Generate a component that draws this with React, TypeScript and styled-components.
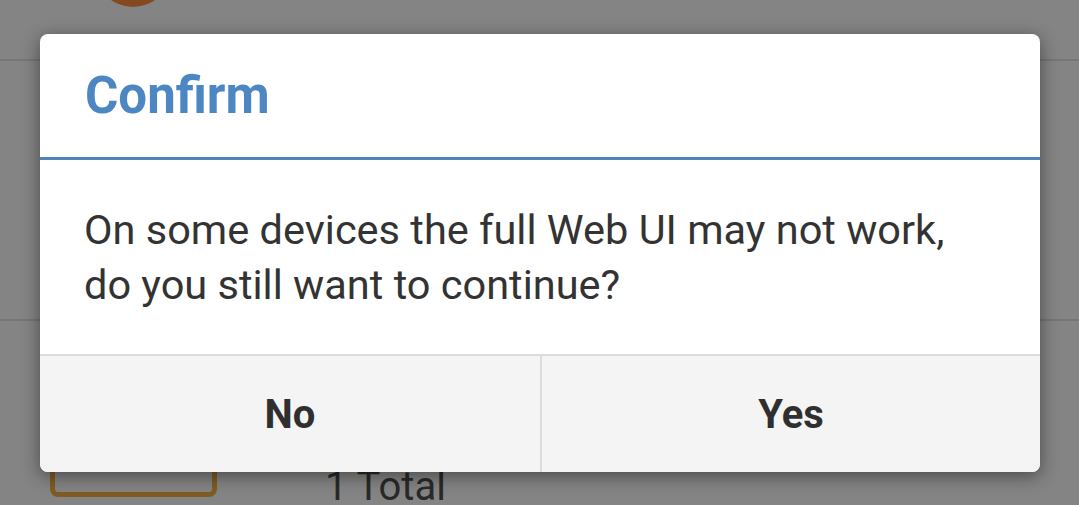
import React from 'react';
import styled, { createGlobalStyle } from 'styled-components';

const GlobalStyle = createGlobalStyle`
  html, body {
    margin: 0;
    padding: 0;
    width: 1079px;
    height: 505px;
    overflow: hidden;
    background: #ffffff;
    font-family: Roboto, "Noto Sans", sans-serif;
  }
`;

// page behind the dialog
const Page = styled.div`
  position: relative;
  width: 1079px;
  height: 505px;
  overflow: hidden;
  background: #fdfdfd;
`;

const TopBar = styled.div`
  height: 59px;
  border-bottom: 2px solid #e2e2e2;
  display: flex;
  align-items: flex-end;
  padding-left: 95px;
`;

const Avatar = styled.div`
  width: 76px;
  height: 76px;
  margin-bottom: 52px;
  border-radius: 50%;
  background: #ff8c3c;
`;

const ListRow = styled.div<{ $height: number; $last?: boolean }>`
  height: ${(p) => p.$height}px;
  border-bottom: ${(p) => (p.$last ? '0' : '2px solid #e2e2e2')};
  display: flex;
  align-items: flex-end;
`;

const BoxIcon = styled.div`
  width: 157px;
  height: 120px;
  margin: 0 0 4px 50px;
  border: 5px solid #f3b040;
  border-radius: 8px;
`;

const TotalText = styled.div`
  margin: 0 0 -6px 108px;
  font-size: 40px;
  line-height: 40px;
  color: #505050;
`;

const Overlay = styled.div`
  position: absolute;
  inset: 0;
  background: rgba(0, 0, 0, 0.48);
`;

const Dialog = styled.div`
  position: absolute;
  left: 40px;
  top: 34px;
  width: 1000px;
  background: #ffffff;
  border-radius: 8px;
  overflow: hidden;
  box-shadow: 0 4px 18px rgba(0, 0, 0, 0.45);
  display: flex;
  flex-direction: column;
`;

const Header = styled.div`
  height: 123px;
  display: flex;
  align-items: center;
  padding: 0 45px;
  border-bottom: 3px solid #4f84b8;
`;

const Title = styled.h1`
  margin: 0;
  font-size: 51px;
  font-weight: 700;
  color: #4d87c3;
`;

const Body = styled.div`
  height: 194px;
  display: flex;
  align-items: center;
  padding: 0 44px;
`;

const Message = styled.p`
  margin: 0;
  font-size: 41.5px;
  line-height: 55px;
  color: #333333;
`;

const Buttons = styled.div`
  display: grid;
  grid-template-columns: 1fr 1fr;
  border-top: 2px solid #dcdcdc;
  background: #f4f4f4;
`;

const Button = styled.button<{ $divider?: boolean }>`
  height: 116px;
  border: 0;
  border-left: ${(p) => (p.$divider ? '2px solid #dcdcdc' : '0')};
  background: transparent;
  font-family: Roboto, "Noto Sans", sans-serif;
  font-size: 40px;
  font-weight: 700;
  color: #2f2f2f;
  padding: 0;
`;

const App: React.FC = () => (
  <>
    <GlobalStyle />
    <Page>
      <TopBar>
        <Avatar />
      </TopBar>
      <ListRow $height={258} />
      <ListRow $height={180} $last>
        <BoxIcon />
        <TotalText>1 Total</TotalText>
      </ListRow>
      <Overlay />
      <Dialog>
        <Header>
          <Title>Confirm</Title>
        </Header>
        <Body>
          <Message>
            On some devices the full Web UI may not work,
            <br />
            do you still want to continue?
          </Message>
        </Body>
        <Buttons>
          <Button>No</Button>
          <Button $divider>Yes</Button>
        </Buttons>
      </Dialog>
    </Page>
  </>
);

export default App;
